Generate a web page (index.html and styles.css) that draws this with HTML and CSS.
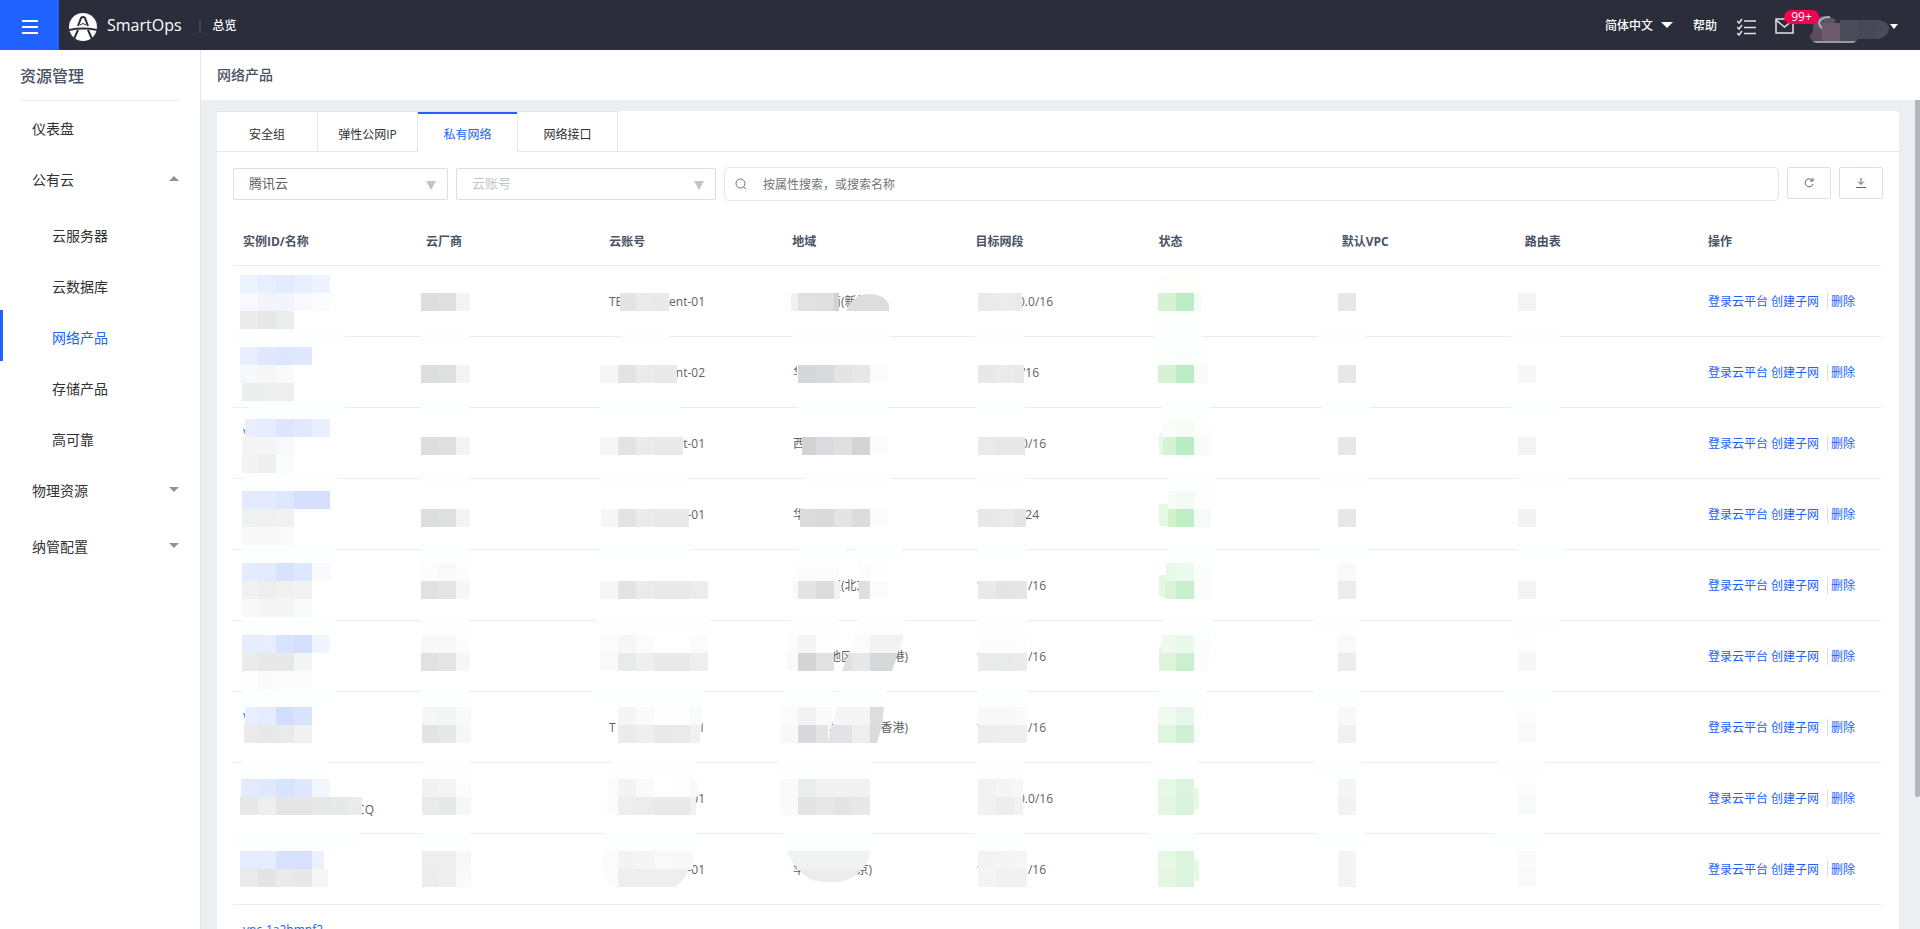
FILE: index.html
```html
<!DOCTYPE html>
<html lang="zh-CN">
	<head>
		<meta charset="UTF-8" />
		<meta name="viewport" content="width=device-width, initial-scale=1.0" />

		<link rel="stylesheet" href="styles.css">

		<title>SmartOps - 网络产品</title>
	</head>
	<body>
		<header class="topbar">
			<button class="menu-btn" aria-label="菜单">
				<svg width="16" height="14" viewBox="0 0 16 14" fill="#fff">
					<rect y="0" width="16" height="2" />
					<rect y="6" width="16" height="2" />
					<rect y="12" width="16" height="2" />
				</svg>
			</button>
			<svg class="logo" width="28" height="28" viewBox="0 0 28 28">
				<circle cx="14" cy="14" r="14" fill="#fff" />
				<path d="M9 13L12 5Q14 3 16 5L19 13" fill="none" stroke="#2b2d3b" stroke-width="2" />
				<path d="M11 12Q14 9 17 12" fill="none" stroke="#2b2d3b" />
				<path d="M0 17Q14 14 28 17" fill="none" stroke="#2b2d3b" stroke-width="2" />
				<path d="M9 17L5 26M19 17L23 26" stroke="#2b2d3b" stroke-width="2" />
			</svg>
			<span class="brand">SmartOps</span>
			<span class="split"></span>
			<a href="#" class="overview">总览</a>

			<nav class="tools">
				<button class="lang">
					简体中文
					<svg width="12" height="6" viewBox="0 0 12 6"><path d="M0 0H12L6 6Z" fill="#fff" /></svg>
				</button>
				<a href="#" class="help">帮助</a>
				<button class="tool-list" aria-label="任务">
					<svg width="20" height="18" viewBox="0 0 20 18" fill="none" stroke="#dfe6e8">
						<path d="M7 3H19M7 9.500H19M7 15.500H19" stroke-width="1.500" />
						<path d="M0 3L2 5L5 1M0 9L2 11L5 7M0 15L2 17L5 13" stroke-width="1.500" />
					</svg>
				</button>
				<button class="mail" aria-label="消息">
					<svg width="19" height="16" viewBox="0 0 19 16" fill="none" stroke="#dfe6e8">
						<rect x="1" y="1" width="17" height="14" stroke-width="1.500" />
						<path d="M1 2L9.500 9L18 2" stroke-width="1.500" />
					</svg>
					<span class="badge">99+</span>
				</button>
				<button class="user" aria-label="用户">
					<svg width="80" height="28" viewBox="0 0 80 28">
						<path d="M3 19V12Q4 0 16 1Q22 2 26 5L20 16Z" fill="#5c5365" />
						<path d="M20 2Q10 2 9 8Q10 13 16 15" fill="none" stroke="#b9aebb" stroke-width="2" />
						<path d="M0 22Q0 16 8 16H12V26H5Q1 26 0 22Z" fill="#5d4a5e" />
						<rect x="12" y="8" width="18" height="18" fill="#6d5b6b" />
						<path d="M30 5H66Q79 6 79 14Q78 22 68 24H48L46 26H30Z" fill="#4a4c59" />
						<rect x="48" y="5" width="18" height="19" fill="#464855" />
						<path d="M2 26H46L44 28H6Z" fill="#9a9ba3" />
					</svg>
					<svg width="8" height="5" viewBox="0 0 8 5"><path d="M0 0H8L4 5Z" fill="#fff" /></svg>
				</button>
			</nav>
		</header>

		<div class="layout">
			<aside class="sidebar">
				<h2>资源管理</h2>
				<a href="#" class="item">仪表盘</a>
				<a href="#" class="group">公有云 <span class="arrow up"></span></a>
				<a href="#" class="sub">云服务器</a>
				<a href="#" class="sub">云数据库</a>
				<a href="#" class="sub active">网络产品</a>
				<a href="#" class="sub">存储产品</a>
				<a href="#" class="sub">高可靠</a>
				<a href="#" class="group">物理资源 <span class="arrow"></span></a>
				<a href="#" class="group">纳管配置 <span class="arrow"></span></a>
			</aside>

			<main class="main">
				<h1>网络产品</h1>
				<div class="content">
					<section class="card">
						<div class="tabs">
							<button>安全组</button>
							<button>弹性公网IP</button>
							<button class="active">私有网络</button>
							<button>网络接口</button>
						</div>

						<div class="filters">
							<label class="select vendor">
								<select aria-label="云厂商">
									<option>腾讯云</option>
								</select>
								<span class="caret"></span>
							</label>
							<label class="select account">
								<select aria-label="云账号">
									<option>云账号</option>
								</select>
								<span class="caret"></span>
							</label>
							<label class="search">
								<svg width="12" height="12" viewBox="0 0 12 12" fill="none" stroke="#6b7288">
									<circle cx="5.500" cy="5.500" r="4.500" />
									<path d="M8.500 9L11 11" />
								</svg>
								<input type="text" placeholder="按属性搜索，或搜索名称" aria-label="搜索" />
							</label>
							<button class="icon-btn" aria-label="刷新">
								<svg width="10" height="10" viewBox="0 0 10 10" fill="none" stroke="#606266">
									<path d="M9 6A4 4 0 1 1 8 2L9 3M9 0V3H6" />
								</svg>
							</button>
							<button class="icon-btn" aria-label="下载">
								<svg width="10" height="10" viewBox="0 0 10 10" fill="none" stroke="#606266">
									<path d="M5 0V6M2 3.500L5 6.500L8 3.500M0 9.500H10" />
								</svg>
							</button>
						</div>

						<table>
							<thead>
								<tr>
									<th>实例ID/名称</th>
									<th>云厂商</th>
									<th>云账号</th>
									<th>地域</th>
									<th>目标网段</th>
									<th>状态</th>
									<th>默认VPC</th>
									<th>路由表</th>
									<th>操作</th>
								</tr>
							</thead>
							<tbody id="rows"></tbody>
						</table>
					</section>
				</div>
				<div class="scroll-thumb"></div>
			</main>
		</div>

		<script src="table.js"></script>
	</body>
</html>
```
FILE: styles.css
```css
* {
	box-sizing: border-box;
}

body {
	margin: 0;
	height: 100vh;
	display: flex;
	flex-direction: column;
	overflow: hidden;
	background-color: #edeef2;
	color: #303133;
	font-family: "Open Sans", "Noto Sans CJK SC", sans-serif;
	font-size: 12px;
}

a {
	color: inherit;
	text-decoration: none;
}

button {
	padding: 0;
	border: none;
	background: none;
	color: inherit;
	font: inherit;
	cursor: pointer;
}

svg {
	display: block;
}

/* top bar */
.topbar {
	flex: none;
	height: 50px;
	display: flex;
	align-items: center;
	background-color: #2b2d3b;
	color: white;
}

.menu-btn {
	width: 59px;
	height: 50px;
	padding-top: 3px;
	display: grid;
	place-items: center;
	background-color: #2062ff;
}

.logo {
	margin: 4px 10px 0;
}

.brand {
	font-size: 16px;
}

.split {
	width: 2px;
	height: 13px;
	margin: 2px 12px 0 17px;
	background-color: #3a4263;
}

.overview,
.lang,
.help {
	font-weight: 500;
}

.tools {
	margin-left: auto;
	padding-right: 22px;
	display: flex;
	align-items: center;
}

.lang {
	display: flex;
	align-items: center;
	gap: 8px;
}

.help {
	margin: 0 20px;
}

.tool-list {
	margin-top: 4px;
}

.mail {
	position: relative;
	margin: 2px 16px 0 18px;
}

.badge {
	position: absolute;
	left: 9px;
	top: -8px;
	width: 35px;
	height: 14px;
	border-radius: 7px;
	background-color: #f5004f;
	line-height: 14px;
}

.user {
	display: flex;
	align-items: center;
	margin-top: 8px;
}

.user svg + svg {
	margin-bottom: 6px;
}

/* side menu */
.layout {
	flex: 1;
	min-height: 0;
	display: flex;
}

.sidebar {
	flex: none;
	width: 201px;
	border-right: 1px solid #e4e6eb;
	background-color: white;
	font-size: 14px;

	h2 {
		margin: 0 20px;
		height: 51px;
		border-bottom: 1px solid #e9ebf0;
		color: #4a5266;
		font-size: 16px;
		font-weight: 500;
		line-height: 52px;
	}

	a {
		display: flex;
		align-items: center;
		height: 51px;
		padding: 2px 21px 0 32px;
	}

	.group {
		height: 56px;
		justify-content: space-between;
		padding-top: 0;
		padding-bottom: 2px;
	}

	.sub {
		padding: 2px 21px 0 49px;
		border-left: 3px solid transparent;
	}

	.active {
		border-left-color: #2062ff;
		color: #2062ff;
	}
}

.arrow {
	margin-bottom: 2px;
	border-width: 5px 5px 0;
	border-style: solid;
	border-color: #909399 transparent transparent;
}

.arrow.up {
	border-width: 0 5px 5px;
	border-color: transparent transparent #909399;
}

/* page */
.main {
	position: relative;
	flex: 1;
	min-width: 0;
	display: flex;
	flex-direction: column;

	h1 {
		flex: none;
		margin: 0;
		padding-left: 16px;
		background-color: white;
		color: #4a5266;
		font-size: 14px;
		font-weight: 500;
		line-height: 50px;
	}
}

.content {
	flex: 1;
	min-height: 0;
	overflow: hidden;
	padding: 11px 21px 0 16px;
}

.scroll-thumb {
	position: absolute;
	top: 50px;
	right: 0;
	width: 5px;
	height: 697px;
	border-radius: 0 0 2px 2px;
	background-color: #b1b5bd;
}

.card {
	min-height: 900px;
	border-radius: 4px;
	background-color: white;
}

.tabs {
	display: flex;
	height: 41px;
	border-bottom: 1px solid #e4e6eb;

	button {
		width: 100px;
		height: 41px;
		padding-top: 5px;
		border-top: 1px solid #e4e6eb;
		border-bottom: 1px solid #e4e6eb;
		border-right: 1px solid #e4e6eb;
	}

	button:first-child {
		width: 101px;
	}

	.active {
		border-bottom-color: white;
		box-shadow: inset 0 2px #2062ff;
		color: #2062ff;
	}
}

.filters {
	display: flex;
	gap: 8px;
	padding: 15px 16px 0;
}

.select {
	position: relative;
	height: 32px;
	margin-top: 1px;

	select {
		width: 100%;
		height: 32px;
		padding: 0 15px 2px;
		appearance: none;
		border: 1px solid #dcdfe6;
		border-radius: 2px;
		background-color: white;
		color: #606266;
		font-family: inherit;
		font-size: 13px;
	}
}

.vendor {
	flex: 0 0 215px;
}

.account {
	flex: 0 0 260px;

	select {
		color: #c0c4cc;
	}
}

.caret {
	position: absolute;
	right: 12px;
	top: 13px;
	border-top: 9px solid #c0c4cc;
	border-left: 5px solid transparent;
	border-right: 5px solid transparent;
}

.search {
	flex: 1;
	height: 34px;
	display: flex;
	align-items: center;
	gap: 14px;
	padding: 0 10px;
	border: 1px solid #e4e6eb;
	border-radius: 4px;

	input {
		flex: 1;
		border: none;
		outline: none;
		color: #606266;
		font: inherit;
	}

	input::placeholder {
		color: #757575;
	}
}

.icon-btn {
	width: 44px;
	height: 32px;
	display: grid;
	place-items: center;
	border: 1px solid #dcdfe6;
	border-radius: 2px;
}

/* table */
table {
	width: calc(100% - 34px);
	margin: 17px 16px 0;
	table-layout: fixed;
	border-collapse: separate;
	border-spacing: 0;
}

th {
	height: 48px;
	padding: 0 10px 2px;
	border-bottom: 1px solid #e9ebf0;
	color: #4a5266;
	text-align: left;
}

td {
	position: relative;
	height: 71px;
	padding: 0 10px;
	border-bottom: 1px solid #ebecf5;
	white-space: nowrap;
}

td a {
	color: #2062ff;
}

td a + a {
	margin-left: 3px;
}

td .bar {
	margin: 0 3px 0 8px;
	border-left: 1px solid #dcdfe6;
}

.cell {
	position: absolute;
	left: 0;
	top: 0;
	width: 100%;
	height: 100%;
	overflow: visible;
	fill: #606266;
}

.cell .id {
	fill: #2062ff;
}
```
FILE: table.js
```js
// where the first 18px block starts in each column
const blockStart = [7, 4, 1, -2, 13, 9, 6, 3];
const size = 18;

// strip: [line, x, width, colours], two-digit colours are greys
// text:  [x, y, text, anchor, class]
const vendor = (x, lines) => lines.map(([line, colors]) => [line, x, 49, colors]);
const tail = (x, text) => [x, 40, text, "end"];
const tagLeft = "M13 25H22V47H13Q10 47 10 44V28Q10 25 13 25Z";
const tagRight = "M44 25H47Q50 25 50 28V44Q50 47 47 47H46Z";
const greyVendor = [[1, "dd dfe1e0 f4"]];

const rows = [
	[
		{ strips: [[0, 7, 90, "edf2ff e6eeff e2ebff e8efff eef3ff"], [1, 7, 90, "f8f9ff f3f4f9 f1f5ff f8f8fe fbfcff"], [2, 7, 54, "eb e7 ebedec"]], gaps: [[-2, 114]] },
		{ strips: vendor(5, greyVendor), gaps: [[5, 48]] },
		{ texts: [[10, 40, "TE"], tail(106, "ent-01")], strips: [[1, 21, 49, "fb e4 ea e9"]], gaps: [[22, 48]] },
		{ texts: [[11, 40, "亚太东南(新加坡)"]], strips: [[1, 9, 48, "f1 e1 df d2"]], shapes: [["M64 45Q72 28 87 28Q101 28 107 38V45Z", "#dddde0"]], gaps: [[10, 98]] },
		{ texts: [tail(88, "0.0/16")], strips: [[1, 13, 44, "e8ebe9 ebedec e8ebe9"]], gaps: [[10, 48]] },
		{ strips: [[0, 9, 43, "fcfefc fcfefc fcfefc"], [1, 9, 43, "d5f2d5 bbeec5 f5fcf5"], [2, 9, 43, "fcfefc fcfefc fcfefc"]], gaps: [[5, 48]] },
		{ strips: [[1, 6, 18, "e7"]], gaps: [[-14, 48]] },
		{ strips: [[1, 3, 18, "f3f5f4"]], gaps: [[-4, 48]] },
	],
	[
		{ strips: [[0, 7, 72, "e8eeff e0e8ff dde5ff e0e8ff"], [1, 7, 54, "f7f8f9 f7 fa"], [2, 9, 52, "eceeed ecefee ee"]], gaps: [[15, 97]] },
		{ strips: vendor(5, greyVendor), gaps: [[5, 48]] },
		{ texts: [tail(106, "ent-02")], strips: [[1, 1, 77, "f6 e3 eb e9 e9"]], gaps: [[1, 80]] },
		{ texts: [[11, 40, "华"]], strips: [[1, 15, 91, "fd d4d6d9 d9dade e4 e7 fb"]], gaps: [[16, 90]] },
		{ texts: [tail(74, "/16")], strips: [[1, 13, 46, "e8 eb e9"]], gaps: [[12, 48]] },
		{ strips: [[0, 9, 46, "fcfefc f9fefb fcfefc"], [1, 9, 50, "d5f2d5 bbeec5 f7fcf7"]], gaps: [[13, 48]] },
		{ strips: [[1, 6, 18, "e7"]], gaps: [[-10, 48]] },
		{ strips: [[1, 3, 18, "f7"]], gaps: [[-4, 48]] },
	],
	[
		{ texts: [[10, 28, "v", "start", "id"]], strips: [[0, 12, 85, "e7eeff e7edff dde5ff e2e9fe e9efff"], [1, 9, 52, "f4f4f5 f5f5f6 f8f9fc"], [2, 9, 52, "f3 ef fafcfb"]], gaps: [[9, 95]] },
		{ strips: vendor(5, greyVendor), gaps: [[5, 48]] },
		{ texts: [tail(106, "t-01")], strips: [[1, 1, 83, "f6 e3 eb e9 e9"]], gaps: [[1, 87]] },
		{ texts: [[11, 40, "西"]], strips: [[1, 20, 87, "fd d2 dadbdf e0 d4 fb"]], gaps: [[22, 86]] },
		{ texts: [tail(81, "0/16")], strips: [[1, 13, 47, "e8ebe9 e6e8e7 e7"]], gaps: [[12, 48]] },
		{ strips: [[0, 13, 48, "f9fcf9 f7fcf8 fcfefc"], [1, 14, 48, "d6f2d6 bbedc4 f7fcf7"]], shapes: [[tagLeft, "#e3f9e3"]], gaps: [[19, 48]] },
		{ strips: [[1, 6, 18, "e7"]], gaps: [[-12, 48]] },
		{ strips: [[1, 3, 18, "f3f5f4"]], gaps: [[4, 48]] },
	],
	[
		{ strips: [[0, 9, 88, "e5ebff e4ebff dde7ff d5e0ff d5e0ff"], [1, 9, 52, "f0f1f2 f0 f1"], [2, 9, 52, "f8 f8 fa"]], gaps: [[9, 95]] },
		{ strips: vendor(5, greyVendor), gaps: [[5, 48]] },
		{ texts: [tail(106, "-01")], strips: [[1, 2, 88, "f6 e3 eb e9 e9"]], gaps: [[2, 91]] },
		{ texts: [[11, 40, "华"]], strips: [[1, 18, 89, "dc dc da e4 dc fb"]], gaps: [[16, 48], [72, 48]] },
		{ texts: [[11, 40, "1"], tail(74, "/24")], strips: [[1, 13, 48, "e8 ea e5"]], gaps: [[13, 49]] },
		{ strips: [[0, 19, 43, "f7fcf7 f3fbf4 fcfefc"], [1, 19, 43, "d3f0c9 bfedc6 f5fcf5"]], shapes: [[tagLeft, "#e3f9e3"]], gaps: [[18, 48]] },
		{ strips: [[1, 6, 18, "e7"]], gaps: [[-12, 48]] },
		{ strips: [[1, 3, 18, "f3"]], gaps: [[2, 48]] },
	],
	[
		{ strips: [[0, 9, 88, "e5ecff e2eaff d7e2ff dde7ff f8faff"], [1, 9, 70, "f1 ecefed f1 f2"], [2, 9, 70, "f8 f5 f5 f9fbfa"]], gaps: [[9, 95]] },
		{ strips: vendor(5, [[0, "fc f9 fc"], [1, "e1 e5 f5f8f6"]]), gaps: [[5, 48]] },
		{ strips: [[1, 1, 108, "f6 e3 eb e9 e9 ec"]], gaps: [[-3, 114]] },
		{ texts: [[11, 40, "华北地区(北京)"]], strips: [[0, 11, 46, "fd fc fc fc"], [0, 76, 30, "ff ff ff ff fc fe"], [1, 12, 46, "f9 e2e5e4 dc f2"], [1, 77, 30, "ff ff ff ff df fb"]], gaps: [[8, 48], [76, 48]] },
		{ texts: [[11, 40, "1"], tail(81, "/16")], strips: [[1, 13, 49, "e7eae9 e4 e6"]], gaps: [[13, 49]] },
		{ strips: [[0, 17, 45, "e9f9e9 ecfaf0 fafefb"], [1, 16, 46, "dbf4d9 c7efcc fafefb"]], shapes: [[tagLeft, "#e3f9e3"]], gaps: [[14, 50]] },
		{ strips: [[0, 6, 18, "f9"], [1, 6, 18, "ec"]], gaps: [[-18, 48]] },
		{ strips: [[1, 3, 18, "f3f5f4"]], gaps: [[-2, 48]] },
	],
	[
		{ strips: [[0, 9, 88, "e5edff e8eeff d8e3ff d4dfff f1f5ff"], [1, 9, 70, "eb e8 e8 f4f6f5"], [2, 9, 70, "fe fa fc fc"]], gaps: [[9, 93]] },
		{ strips: vendor(5, [[0, "f8 f8 fc"], [1, "e1 e5 f5f8f6"]]), gaps: [[5, 48]] },
		{ strips: [[0, 1, 108, "fb f6 fb ff ff fb"], [1, 1, 108, "f9 e8ebe9 ef e9 e9 ee"]], gaps: [[-8, 112]] },
		{
			texts: [[11, 40, "港澳台地区(中国香港)"]],
			strips: [[0, 7, 50, "fb f5 fd"], [1, 5, 50, "f9 d4 e2"]],
			shapes: [
				["M73 14H88V32H67Z", "#fbfbfb"],
				["M88 14H122L116 32H88Z", "#f2f2f3"],
				["M67 32H70V50H60Z", "#dfe0e1"],
				["M70 32H88V50H70Z", "#e7e7e7"],
				["M88 32H116L110 50H88Z", "#d6d8da"],
			],
			gaps: [[2, 48], [56, 48]],
		},
		{ texts: [[11, 40, "1"], tail(81, "/16")], strips: [[0, 13, 49, "fc fc fd"], [1, 13, 49, "eb e8ebe9 eb"]], gaps: [[13, 49]] },
		{ strips: [[0, 13, 48, "edfaed e9f9ec fafefb"], [1, 10, 50, "def4db caf0d0 fafefb"]], shapes: [[tagLeft, "#e3f9e3"]], gaps: [[9, 48]] },
		{ strips: [[0, 6, 18, "f9"], [1, 6, 18, "ed"]], gaps: [[-18, 48]] },
		{ strips: [[0, 3, 18, "fd"], [1, 3, 18, "f7"]], gaps: [[-10, 48]] },
	],
	[
		{ texts: [[10, 28, "v", "start", "id"]], strips: [[0, 12, 67, "e7eeff e5ecff d2deff d8e3ff"], [1, 11, 68, "eb e8 e9ebea f1"]], gaps: [[9, 87]] },
		{ strips: vendor(6, [[0, "f6 f4f6f5 fa"], [1, "e4 e6e8e7 f5f8f6"]]), gaps: [[6, 48]] },
		{ texts: [[10, 40, "T"], tail(106, "1")], strips: [[0, 19, 84, "fb f5 fa fe fe f8fbfa"], [1, 19, 82, "fb eb eef0ef e9 e9ebea f1"]], gaps: [[12, 86]] },
		{
			texts: [[11, 40, "港澳台地区(中国香港)"]],
			strips: [[0, -1, 51, "fb f3 fa"], [1, -2, 48, "f8 d8d9dc e3"]],
			shapes: [
				["M54 15H88V33H51Z", "#f5f5f6"],
				["M88 15H102L100 33H88Z", "#dddddd"],
				["M49 33H70V51H46Z", "#e2e3e6"],
				["M70 33H88V51H70Z", "#eeeeee"],
				["M88 33H100L95 51H88Z", "#dbdbdb"],
			],
			gaps: [[-4, 95]],
		},
		{ texts: [[11, 40, "1"], tail(81, "/16")], strips: [[0, 13, 49, "f8 f8 fa"], [1, 13, 49, "eceeed ee ee"]], gaps: [[10, 48]] },
		{ strips: [[0, 9, 45, "f0fbf0 e7f6ea fbfefc"], [1, 9, 42, "dff5de d0f1d4 f7fcf8"]], gaps: [[1, 48]] },
		{ strips: [[0, 6, 18, "f8"], [1, 6, 18, "eef1f0"]], gaps: [[-18, 48]] },
		{ strips: [[0, 3, 18, "fc"], [1, 3, 18, "f9"]], gaps: [[-17, 48]] },
	],
	[
		{ texts: [[141, 51, "CQ", "end"]], strips: [[0, 8, 89, "e5ebff e0e8ff d7e4ff dfe7ff f2f6ff"], [1, 7, 122, "e7 ee e5 e5 e6e8e7 e7e9e8 eb"]], gaps: [[2, 124]] },
		{ strips: vendor(6, [[0, "f1 f4 fc"], [1, "ea e7e9e8 f6f8f7"]]), gaps: [[6, 48]] },
		{ texts: [tail(106, "01")], strips: [[0, 9, 89, "fb f3 fa ff fd f9"], [1, 8, 89, "fb ee ec e9 e9 f1"]], gaps: [[5, 92]] },
		{ strips: [[0, -2, 90, "fa ebedec f1 f1 f1"], [1, -2, 90, "fa e4 e8 e4 e8"]], gaps: [[0, 90]] },
		{ texts: [tail(88, "0.0/16")], strips: [[0, 13, 45, "f2 f5 f8"], [1, 13, 45, "f1 ed f2"]], gaps: [[10, 48]] },
		{ strips: [[0, 9, 36, "e5f8e5 ddf5e0"], [1, 9, 36, "e5f6e2 d9f4de"]], shapes: [[tagRight, "#e3f9e3"]], gaps: [[-1, 48]] },
		{ strips: [[0, 6, 18, "f4f6f5"], [1, 6, 18, "f2"]], gaps: [[-15, 48]] },
		{ strips: [[0, 3, 18, "fc"], [1, 3, 18, "f8faf9"]], gaps: [[-20, 48]] },
	],
	[
		{ strips: [[0, 7, 84, "e3edff e6edff d7e1ff d7e1ff ecf1ff"], [1, 7, 88, "eb e4 eb e8 f6"]] },
		{ strips: vendor(6, [[0, "ee ee f8"], [1, "ec ee fa"]]) },
		{
			texts: [tail(106, "-01")],
			strips: [[0, 3, 91, "fb f3 f5 f9 f8 f8"]],
			shapes: [["M3 35H19V53H12Q5 45 3 35Z", "#fbfbfb"], ["M19 35H90Q86 46 76 53H19Z", "#eeeeee"]],
		},
		{
			texts: [[11, 40, "华北地区(北京)"]],
			shapes: [["M5 17H88Q87 30 77 38Q68 48 52 48H43Q28 48 18 37Q8 27 5 17Z", "#f1f2f2"], ["M18 35H79Q70 48 52 48H43Q28 48 18 37Z", "#ececec"]],
		},
		{ texts: [[11, 40, "1"], tail(81, "/16")], strips: [[0, 13, 49, "f3 f4 f6"], [1, 13, 49, "f3f5f4 f1 f1"]] },
		{ strips: [[0, 9, 36, "e5f8e5 dbf5df"], [1, 9, 36, "e5f7e3 daf4de"]], shapes: [[tagRight, "#e3f9e3"]] },
		{ strips: [[0, 6, 18, "f4"], [1, 6, 18, "f4"]] },
		{ strips: [[0, 3, 18, "fa"], [1, 3, 18, "f9"]] },
	],
];

const drawStrip = ([line, x, width, colors], column, row) => {
	const y = 9 + row + line * size;
	const start = blockStart[column];
	return colors
		.split(" ")
		.map((color, i) => {
			const left = Math.max(x, start + i * size);
			const right = Math.min(x + width, start + (i + 1) * size);
			if (right <= left) return "";
			const fill = color.length == 2 ? color.repeat(3) : color;
			return `<rect x="${left}" y="${y}" width="${right - left}" height="${size}" fill="#${fill}" />`;
		})
		.join("");
};

const drawCell = ({ texts = [], strips = [], shapes = [], gaps = [] }, column, row) => {
	let svg = texts
		.map(([x, y, text, anchor = "start", name = ""]) => `<text x="${x}" y="${y}" text-anchor="${anchor}" class="${name}">${text}</text>`)
		.join("");
	svg += shapes.map(([d, fill]) => `<path d="${d}" fill="${fill}" />`).join("");
	svg += strips.map((strip) => drawStrip(strip, column, row)).join("");
	svg += gaps.map(([x, width]) => `<rect x="${x}" y="${63 + row}" width="${width}" height="${size}" fill="#fdfffe" />`).join("");
	return `<td><svg class="cell">${svg}</svg></td>`;
};

const actions = `<td><a href="#">登录云平台</a><a href="#">创建子网</a><span class="bar"></span><a href="#">删除</a></td>`;
const lastRow = `<tr><td><svg class="cell"><text x="10" y="29" class="id">vpc-1a2bmnf2</text></svg></td><td colspan="8"></td></tr>`;

document.querySelector("#rows").innerHTML =
	rows
		.map((cells, row) => `<tr>${cells.map((cell, column) => drawCell(cell, column, row)).join("")}${actions}</tr>`)
		.join("") + lastRow;
```
